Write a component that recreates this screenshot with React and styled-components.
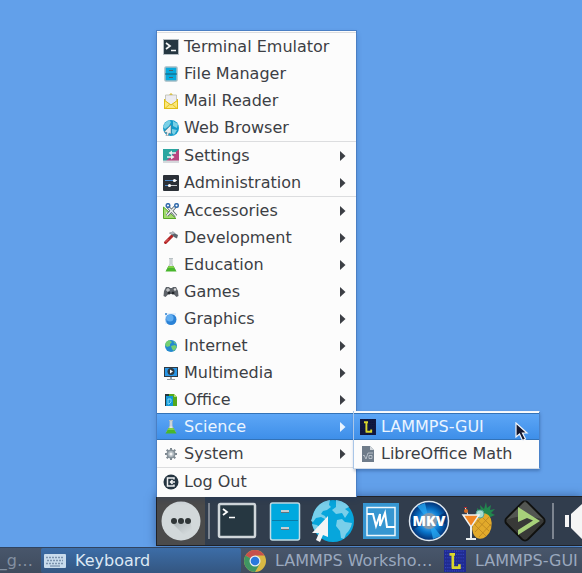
import React from "react";
import styled, { createGlobalStyle, css } from "styled-components";

const GlobalStyle = createGlobalStyle`
  * { box-sizing: border-box; }
  body { margin: 0; background: #62a0ea; }
  button { font: inherit; color: inherit; border: 0; padding: 0; background: none; text-align: left; }
`;

const Screen = styled.div`
  display: flex;
  flex-direction: column;
  min-height: 100vh;
  overflow: hidden;
  background: #62a0ea;
  font-family: "DejaVu Sans", sans-serif;
  font-size: 16px;
  line-height: 20px;
`;

const Desktop = styled.main`
  flex: 1;
  display: flex;
  align-items: flex-end;
  padding-left: 156px;
`;

const menuSurface = css`
  background: #fcfcfc;
  border: 1px solid #4a7fc4;
  color: #3c3f45;
`;

const Menu = styled.nav`
  ${menuSurface}
  position: relative;
  z-index: 2;
  width: 201px;
  margin-bottom: -1px;
  padding: 1px 0 2px;
  border-bottom: 0;
  box-shadow: 0 3px 5px rgba(20, 50, 100, 0.2);
`;

const MenuLine = styled.hr`
  height: 1px;
  margin: 0;
  border: 0;
  background: #dcdddf;
`;

const MenuEntry = styled.div`
  position: relative;
`;

const MenuButton = styled.button`
  display: flex;
  align-items: center;
  gap: 5px;
  width: 100%;
  height: 27px;
  padding: 0 10px 0 6px;
  white-space: nowrap;
  ${(p) =>
    p.$active &&
    css`
      color: #eaf4ff;
      background: linear-gradient(#5ea7f7, #3d8ee8);
      box-shadow: inset 0 1px #3373b8, inset 0 -1px #3373b8;
    `}
`;

const MenuLabel = styled.span`
  flex: 1;
`;

const Submenu = styled.div`
  ${menuSurface}
  position: absolute;
  top: -2px;
  left: 197px;
  width: 186px;
  padding: 1px 0;
  border-color: #f4f7fa;
  border-left: 0;
  border-right-color: #4a83ca;
  border-bottom-color: #d3dce7;
  box-shadow: -1px 0 #a9c6e8, 0 2px 3px rgba(20, 50, 100, 0.35);
`;

const Pointer = styled.svg`
  position: absolute;
  top: 10px;
  left: 161px;
  pointer-events: none;
`;

const Dock = styled.div`
  display: flex;
  flex: none;
  height: 50px;
  margin: 0 0 1px 156px;
  overflow: hidden;
  background: #313d4d;
  border: 1px solid #202227;
  border-right: 0;
  box-shadow: 0 0 9px rgba(20, 40, 80, 0.5);
`;

const DockButton = styled.button`
  flex: none;
  display: grid;
  place-items: center;
  width: 48px;
  height: 48px;
  background: ${(p) => (p.$pressed ? "#4b4b4b" : "transparent")};
`;

const DockDivider = styled.span`
  flex: none;
  width: 2px;
  height: 36px;
  margin: 6px 3px;
  background: #7d8590;
`;

const Taskbar = styled.footer`
  display: flex;
  flex: none;
  position: relative;
  height: 26px;
  overflow: hidden;
  border-top: 1px solid #304460;
  background: linear-gradient(#48566b, #3f4b5d);
`;

const Task = styled.button`
  flex: none;
  display: flex;
  align-items: center;
  gap: 9px;
  width: ${(p) => (p.$cut ? "41px" : "200px")};
  justify-content: ${(p) => (p.$cut ? "flex-end" : "flex-start")};
  padding: ${(p) => (p.$cut ? "0 8px 0 0" : "0 6px 0 3px")};
  overflow: hidden;
  white-space: nowrap;
  color: ${(p) => (p.$active ? "#dce8f4" : p.$cut ? "#8390a1" : "#9aa8be")};
  background: ${(p) => (p.$active ? "linear-gradient(#3c6da7, #345681)" : "transparent")};
  border-radius: 2px;
`;

const svg16 = { width: 16, height: 16, viewBox: "0 0 16 16", "aria-hidden": true };

const Flask = () => (
  <svg {...svg16}>
    <path d="M6 1.500h4M7 1v6L3.500 13.500h9L9 7V1" fill="#dfe5e6" stroke="#b9c1c4" />
    <path d="M5.500 9h5l3 5.500h-11z" fill="#48b62c" />
    <path d="M5.600 9h4.800l1 2H4.600z" fill="#80cf47" />
  </svg>
);

const icons = {
  terminal: (
    <svg {...svg16}>
      <path fill="#b4bdc2" d="M0 0h16v16H0z" />
      <path fill="#263741" d="M1 1h14v14H1z" />
      <path d="M3 4l4 3-4 3M8 11.500h5" fill="none" stroke="#f4f6f7" strokeWidth="1.700" />
    </svg>
  ),
  files: (
    <svg {...svg16}>
      <rect x="2" y="1" width="12" height="14" rx="1" fill="#07a9dc" stroke="#a3bcc5" strokeWidth="1.500" />
      <path d="M2 8h12" stroke="#175b75" />
      <path d="M6 4.500h4M6 11.500h4" stroke="#4b6470" />
    </svg>
  ),
  mail: (
    <svg {...svg16}>
      <path d="M6 2l2-2 2 2zM1 6h14v10H1z" fill="#dfbd16" />
      <path d="M2.500 2h11v7L8 12 2.500 9z" fill="#ececf2" stroke="#bbbcae" strokeWidth=".8" />
      <path d="M2 7l4.500 4L2 15zM14 7l-4.500 4 4.500 4zM3 15l4-3.500h2l4 3.500z" fill="#fbe77a" />
      <path d="M1 7l7 5 7-5" fill="none" stroke="#dfbd16" />
    </svg>
  ),
  web: (
    <svg {...svg16}>
      <circle cx="8" cy="8" r="8" fill="#139bca" />
      <path d="M2 3L6 0l2 2-2 4-4 3-2-2zM10 1l5 3-1 4-4-2zM9 9l5 1-3 5-2-2z" fill="#7bd0e6" />
      <path d="M8 5L1 12l3 .5L3 16h2l1-3 2 1z" fill="#eceeef" stroke="#60717b" strokeWidth=".5" />
    </svg>
  ),
  settings: (
    <svg {...svg16}>
      <path d="M0 1h16v14H0z" fill="#2aa5a0" />
      <path d="M16 1v12H3z" fill="#b9437f" />
      <path d="M0 12.500h16V15H0z" fill="#d6d8dc" />
      <path d="M7 5h6M4 9h6" stroke="#eef1f2" strokeWidth="1.600" />
      <path d="M9 2.500v5L5.500 5zM8 6.500v5L11.500 9z" fill="#eef1f2" />
    </svg>
  ),
  administration: (
    <svg {...svg16}>
      <rect width="16" height="16" rx="1" fill="#2b3037" />
      <path d="M2 5.500h8M2 10.500h4" stroke="#4c88c8" />
      <path d="M11 5.500h3M7 10.500h7" stroke="#c7cbd0" />
      <circle cx="11.500" cy="5.500" r="1.600" fill="#fff" />
      <circle cx="6.500" cy="10.500" r="1.600" fill="#fff" />
    </svg>
  ),
  accessories: (
    <svg {...svg16}>
      <path d="M.5 4l12.500 11.500H.5z" fill="#a3da70" stroke="#57a925" />
      <path d="M3 9l3 3H3z" fill="#fff" />
      <path d="M4 12.500L12 4M13 13L5 4" stroke="#58646b" strokeWidth="3.200" />
      <path d="M4 12.500L12 4M13 13L5 4" stroke="#eef1ef" strokeWidth="1.600" />
      <circle cx="5" cy="2.500" r="1.800" fill="none" stroke="#346cac" strokeWidth="1.500" />
      <circle cx="13.500" cy="2.500" r="1.800" fill="none" stroke="#346cac" strokeWidth="1.500" />
    </svg>
  ),
  development: (
    <svg {...svg16}>
      <path d="M2.500 12.500L9 6" stroke="#b32526" strokeWidth="3" strokeLinecap="round" />
      <path d="M2.500 12l3-3" stroke="#e76969" />
      <path d="M6 3l4-1.500 3 2.500 2 1-1 3.500-3-1.500-2-2z" fill="#5d666e" />
      <path d="M6 3l4-1.500 2 2-3 1z" fill="#b2bac0" />
    </svg>
  ),
  education: <Flask />,
  games: (
    <svg {...svg16}>
      <path d="M3 3h3l1 1h2l1-1h3l2 4 .5 5-2 1-3-3h-5l-3 3-2-1L1 7z" fill="#5e6369" />
      <path d="M3 6h4M5 4v4" stroke="#e0e2e3" />
      <circle cx="12" cy="5.500" r="1.200" fill="#ddd" />
      <circle cx="6" cy="9" r="1.500" fill="#25292d" />
      <circle cx="10" cy="9" r="1.500" fill="#25292d" />
    </svg>
  ),
  graphics: (
    <svg {...svg16}>
      <circle cx="8" cy="8.500" r="5.500" fill="#2b82d6" />
      <circle cx="7" cy="7" r="3.500" fill="#60adf1" />
      <path d="M3 13V3h10" fill="none" stroke="#a4cef5" strokeWidth=".6" />
      <circle cx="3" cy="3" r="1" fill="#3385d1" />
    </svg>
  ),
  internet: (
    <svg {...svg16}>
      <circle cx="8" cy="8" r="6" fill="#248acf" />
      <path d="M3 4l3-2 3 2-2 2v2L4 9 2 7zM8 8l4-1 2 2-3 4-2-2zM10 3l3 2-1 1z" fill="#74cf72" />
    </svg>
  ),
  multimedia: (
    <svg {...svg16}>
      <path d="M1 2h14v10H1z" fill="#303a43" />
      <path d="M2 3h12v8H2z" fill="#2997e7" />
      <circle cx="8" cy="6.500" r="3.500" fill="#303940" />
      <path d="M7 4.500v4l3-2z" fill="#fff" />
      <path d="M7 12h2v2h3v1H4v-1h3z" fill="#959da2" />
    </svg>
  ),
  office: (
    <svg {...svg16}>
      <path d="M6 2h5l3 3v9H6z" fill="#55a91d" />
      <path d="M11 2v3h3z" fill="#b2dc70" />
      <path d="M2 2h4v12H2z" fill="#25353d" />
      <path d="M3 4h7v10H3z" fill="#1399d8" />
      <path d="M5 7h3v3l-2 2H5z" fill="none" stroke="#85d8f5" />
    </svg>
  ),
  science: <Flask />,
  system: (
    <svg {...svg16}>
      <path d="M8 2v12M2 8h12M3.700 3.700l8.600 8.600M12.300 3.700l-8.600 8.600" stroke="#7d8890" strokeWidth="2" />
      <circle cx="8" cy="8" r="4.500" fill="#87929a" />
      <circle cx="8" cy="8" r="3" fill="#b3bcc2" />
      <circle cx="8" cy="8" r="1.500" fill="#f4f5f5" />
    </svg>
  ),
  logout: (
    <svg {...svg16}>
      <circle cx="8" cy="8" r="7.500" fill="#253541" />
      <path d="M11 5.500V4H4.500v8H11v-1.500" fill="none" stroke="#f1f2f3" strokeWidth="1.500" />
      <path d="M7 8h5M9.500 6L7.500 8l2 2" fill="none" stroke="#f1f2f3" strokeWidth="1.500" />
    </svg>
  ),
  math: (
    <svg {...svg16}>
      <path d="M2 0h8l4 4v12H2z" fill="#6f7c8a" />
      <path d="M10 0v4h4z" fill="#d2d7dc" />
      <path d="M3 10l1-1 2 4 2-6h5M9 9.500h3v3H9z" fill="none" stroke="#c8ced5" strokeWidth=".8" />
    </svg>
  ),
};

const LammpsIcon = ({ size, dark }) => (
  <svg width={size} height={size} viewBox="0 0 20 20" aria-hidden="true">
    <path fill={dark ? "#121943" : "#202b91"} d="M0 0h20v20H0z" />
    <path
      d="M1 1h18M1 4h18M1 7h18M1 10h18M1 13h18M1 16h18M1 19h18"
      stroke={dark ? "#071034" : "#3549c4"}
      strokeDasharray="1 1"
    />
    <path d="M5 4h5M8 4v12M7 16h7v-3" fill="none" stroke="#d9d62c" strokeWidth="2.400" />
  </svg>
);

const Arrow = () => (
  <svg width="6" height="12" viewBox="0 0 6 12" aria-hidden="true">
    <path d="M0 1l5.500 5L0 11z" fill="currentColor" />
  </svg>
);

const groups = [
  ["Terminal Emulator:terminal", "File Manager:files", "Mail Reader:mail", "Web Browser:web"],
  ["Settings:settings:sub", "Administration:administration:sub"],
  [
    "Accessories:accessories:sub",
    "Development:development:sub",
    "Education:education:sub",
    "Games:games:sub",
    "Graphics:graphics:sub",
    "Internet:internet:sub",
    "Multimedia:multimedia:sub",
    "Office:office:sub",
    "Science:science:sub",
    "System:system:sub",
  ],
  ["Log Out:logout"],
];

const ScienceMenu = () => (
  <Submenu role="menu" aria-label="Science">
    <MenuButton role="menuitem" $active>
      <LammpsIcon size={16} dark />
      <MenuLabel>LAMMPS-GUI</MenuLabel>
    </MenuButton>
    <MenuButton role="menuitem">
      {icons.math}
      <MenuLabel>LibreOffice Math</MenuLabel>
    </MenuButton>
    <Pointer width="14" height="20" viewBox="0 0 14 20" aria-hidden="true">
      <path d="M1 1v14l3.500-3 3 6.500 3-1.500-3-6H12z" fill="#15172d" stroke="#f2f6fb" strokeWidth="1.200" />
    </Pointer>
  </Submenu>
);

const Entry = ({ data }) => {
  const [label, icon, sub] = data.split(":");
  const active = label === "Science";
  return (
    <MenuEntry>
      <MenuButton role="menuitem" $active={active} aria-haspopup={sub ? "menu" : undefined}>
        {icons[icon]}
        <MenuLabel>{label}</MenuLabel>
        {sub && <Arrow />}
      </MenuButton>
      {active && <ScienceMenu />}
    </MenuEntry>
  );
};

const dockSvg = { width: 44, height: 44, viewBox: "0 0 44 44", "aria-hidden": true };

const LauncherIcon = () => (
  <svg {...dockSvg}>
    <defs>
      <linearGradient id="fade" x1="0" y1="0" x2="1" y2="1">
        <stop offset=".2" stopColor="#b3babd" />
        <stop offset=".8" stopColor="#d2d8da" />
      </linearGradient>
    </defs>
    <circle cx="22" cy="22" r="19.500" fill="#d2d8da" />
    <path d="M13 24l12 12 9-3-3-11z" fill="url(#fade)" />
    <circle cx="15" cy="22" r="3" fill="#303638" />
    <circle cx="22" cy="22" r="3" fill="#303638" />
    <circle cx="29" cy="22" r="3" fill="#303638" />
  </svg>
);

const dockApps = [
  ["Terminal", (
    <svg {...dockSvg}>
      <rect x="4" y="5" width="36" height="33" rx="1.500" fill="#263741" stroke="#d0d6da" strokeWidth="2.500" />
      <path d="M8 10l4 3-4 3" fill="none" stroke="#fff" strokeWidth="1.800" />
      <path d="M14 18.500h6" stroke="#fff" strokeWidth="1.500" />
    </svg>
  )],
  ["File Manager", (
    <svg {...dockSvg}>
      <rect x="7.500" y="4" width="29" height="37" rx="2" fill="#00a9df" stroke="#c1dce5" strokeWidth="1.500" />
      <path d="M9 21.500h26" stroke="#087ca8" />
      <path d="M18 12h8M18 29h8" stroke="#c6ced2" strokeWidth="2" />
      <path d="M18 13.500h8M18 30.500h8" stroke="#60747e" />
    </svg>
  )],
  ["Web Browser", (
    <svg {...dockSvg}>
      <circle cx="22" cy="22" r="21" fill="#07a6dc" />
      <path d="M3 13C6 6 12 2 19 1l-1 5 2 2-4 3-4 1-2 3 4 2 2 4-6-3-5 1-3 4-2-1zM25 1c6 1 10 3 13 7l-4 2 4 3-4 6-3-5-6 1-4-4 4-3zM26 21l5-1 3 3 7 1c-1 5-3 8-6 11l-2 5-3-1-1-7-4-5zM1 25l5 1 4 4-3 5C4 33 2 29 1 25z" fill="#79cfea" />
      <path d="M17 17v21l-5-2-3 7-4-2 3-7H1z" fill="#f4f4f5" />
    </svg>
  )],
  ["System Monitor", (
    <svg {...dockSvg}>
      <path fill="#3696d1" d="M4 4h36v36H4z" />
      <path d="M8 8.500h28v28H8z" fill="none" stroke="#eef7fc" strokeWidth="1.500" />
      <path d="M8 15h6l3 12 4-12v12l5-13 2 14h8" fill="none" stroke="#fff" strokeWidth="2" />
    </svg>
  )],
  ["MKV", (
    <svg {...dockSvg}>
      <defs>
        <radialGradient id="disc">
          <stop offset=".1" stopColor="#69c8ff" />
          <stop offset=".6" stopColor="#0874ca" />
          <stop offset="1" stopColor="#032d70" />
        </radialGradient>
      </defs>
      <circle cx="22" cy="22" r="19.500" fill="url(#disc)" stroke="#dee7ef" strokeWidth="1.500" />
      <path d="M22 22L10 7l8-3zM22 22l12 15-8 3z" fill="#28a9f4" opacity=".75" />
      <path d="M22 22L39 13v12zM22 22L5 31V20z" fill="#032c69" opacity=".7" />
      <circle cx="22" cy="22" r="8" fill="#8199ad" />
      <text x="22" y="27" textAnchor="middle" fontFamily="Open Sans, sans-serif" fontSize="14" fontWeight="800" fill="#fff">MKV</text>
    </svg>
  )],
  ["Cocktail", (
    <svg {...dockSvg}>
      <path d="M23 15l-1-6 4 3-1-6 4 4 2-7 1 6 4-3-1 5 5-1-4 4 4 2-7 3z" fill="#21864d" />
      <ellipse cx="27" cy="27" rx="9.500" ry="13" transform="rotate(15 27 27)" fill="#e2aa2b" />
      <path d="M21 20l13 12M19 25l12 12M25 16l11 11M34 18L20 33M36 25L24 38M29 15L20 26" stroke="#b98420" strokeWidth=".8" />
      <circle cx="25" cy="15" r="4" fill="#a8ddcf" stroke="#55a69a" />
      <path d="M8 16h16l-8 12z" fill="#f18624" stroke="#eef2f4" strokeWidth="1.500" />
      <path d="M16 27v13M11 40h10" stroke="#e8edef" strokeWidth="2" />
      <path d="M13 16L10 8" stroke="#e9edee" />
      <circle cx="11" cy="12" r="2" fill="#d86c23" />
      <path d="M9 8.500h3" stroke="#b5272e" />
    </svg>
  )],
  ["Launcher", (
    <svg {...dockSvg}>
      <rect x="7" y="7" width="30" height="30" rx="4" transform="rotate(45 22 22)" fill="#383937" stroke="#10110f" strokeWidth="2" />
      <path d="M22 2l19 19c-14-5-25-5-38 0z" fill="#767974" opacity=".45" />
      <path d="M15 8l22 14-22 14v-5l15-9.500-6-2.500-9 4z" fill="#a8d17a" />
    </svg>
  )],
];

const KeyboardIcon = () => (
  <svg width="22" height="16" viewBox="0 0 22 16" aria-hidden="true">
    <rect y="1" width="22" height="14" rx="1" fill="#c9dced" />
    <path d="M2 4.500h18M3 7.500h16M2 10.500h18" stroke="#7c93ae" strokeWidth="1.500" strokeDasharray="2 1" />
    <path d="M6 13h10" stroke="#67809e" />
  </svg>
);

const ChromeIcon = () => (
  <svg width="22" height="22" viewBox="0 0 22 22" aria-hidden="true">
    <circle cx="11" cy="11" r="11" fill="#d9b944" />
    <path d="M11 11L1.500 5.500A11 11 0 0 1 20.500 5.500H11z" fill="#c7514c" />
    <path d="M1.500 5.500A11 11 0 0 0 11 22l5-8.500-5-2.500z" fill="#3f9662" />
    <circle cx="11" cy="11" r="5.500" fill="#e8edf1" />
    <circle cx="11" cy="11" r="4.300" fill="#2a78dc" />
  </svg>
);

export default function App() {
  return (
    <Screen>
      <GlobalStyle />
      <Desktop>
        <Menu aria-label="Applications">
          {groups.map((group, i) => (
            <React.Fragment key={i}>
              <MenuLine />
              {group.map((data) => (
                <Entry key={data} data={data} />
              ))}
            </React.Fragment>
          ))}
        </Menu>
      </Desktop>
      <Dock>
        <DockButton $pressed aria-label="Applications">
          <LauncherIcon />
        </DockButton>
        <DockDivider />
        {dockApps.map(([name, icon]) => (
          <DockButton key={name} aria-label={name}>
            {icon}
          </DockButton>
        ))}
        <DockDivider />
        <DockButton aria-label="Volume">
          <svg {...dockSvg}>
            <path d="M6 16h4v12H6zM12 15L23 5v35L12 29z" fill="#f5f5f5" />
          </svg>
        </DockButton>
      </Dock>
      <Taskbar>
        <Task $cut>_g…</Task>
        <Task $active>
          <KeyboardIcon />
          Keyboard
        </Task>
        <Task>
          <ChromeIcon />
          LAMMPS Worksho…
        </Task>
        <Task>
          <LammpsIcon size={22} />
          LAMMPS-GUI
        </Task>
      </Taskbar>
    </Screen>
  );
}
